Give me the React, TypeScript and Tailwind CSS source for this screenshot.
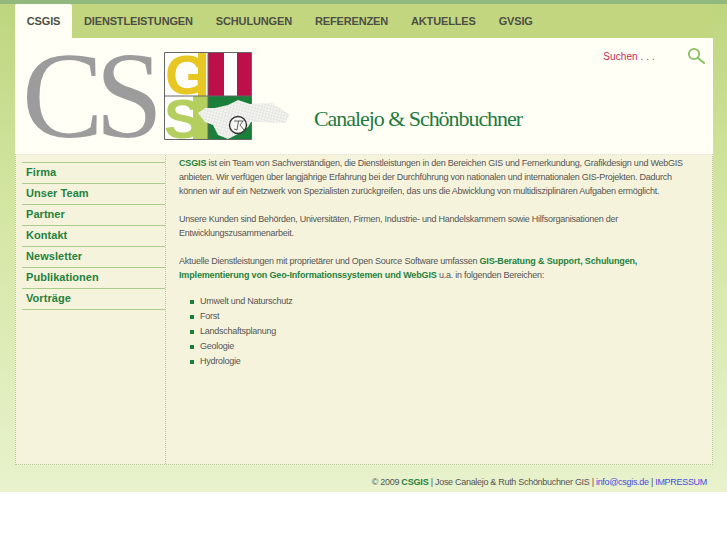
import * as React from 'react';

const NAV = ['CSGIS', 'DIENSTLEISTUNGEN', 'SCHULUNGEN', 'REFERENZEN', 'AKTUELLES', 'GVSIG'];
const SIDE = ['Firma', 'Unser Team', 'Partner', 'Kontakt', 'Newsletter', 'Publikationen', 'Vorträge'];
const AREAS = ['Umwelt und Naturschutz', 'Forst', 'Landschaftsplanung', 'Geologie', 'Hydrologie'];

const Logo = () => (
  <svg width="127" height="90" viewBox="0 0 127 90" className="shrink-0">
    <defs>
      <pattern id="mesh" width="3" height="3" patternUnits="userSpaceOnUse" patternTransform="rotate(15)">
        <rect width="3" height="3" fill="#f4f4f1" />
        <path d="M0 0H3M0 0V3" stroke="#c2c2bf" strokeWidth="0.5" />
      </pattern>
    </defs>
    <rect x="0.5" y="0.5" width="87" height="87" fill="#ffffff" />
    <rect x="44" y="1" width="43" height="43" fill="#bd0f4a" />
    <rect x="60" y="1" width="13" height="43" fill="#ffffff" />
    <rect x="34" y="1" width="8" height="43" fill="#e8c722" />
    <text x="1" y="42" fontFamily="'Liberation Sans', sans-serif" fontWeight="700" fontSize="56" fill="#e8c722">G</text>
    <rect x="29" y="44" width="15" height="43" fill="#b5cf5f" />
    <text x="0" y="86" fontFamily="'Liberation Sans', sans-serif" fontWeight="700" fontSize="56" fill="#b5cf5f">S</text>
    <rect x="44" y="44" width="43" height="43" fill="#1b7f3c" />
    <path d="M0.5 0.5H87.5V87.5H0.5ZM44 0.5V87.5M0.5 44H87.5" fill="none" stroke="#666" strokeWidth="1" />
    <path
      d="M34 61L41 56L51 56L64 53L74 48L86 52L108 51L119 58L126 63L121 71L87 70L84 75L76 81L64 87L54 83L49 73L41 70Z"
      fill="url(#mesh)"
    />
    <circle cx="74" cy="73" r="8.5" fill="#f6f6f2" stroke="#333" strokeWidth="1.4" />
    <path d="M70 69H79M74.5 69L73 78L70 77M76 73L80 78M76 73L79.5 68.5" fill="none" stroke="#444" strokeWidth="0.8" />
  </svg>
);

const SearchIcon = () => (
  <svg width="18" height="17" viewBox="0 0 18 17" className="shrink-0">
    <circle cx="7" cy="7" r="5.2" fill="none" stroke="#8cc063" strokeWidth="1.8" />
    <path d="M11 11L17 16" stroke="#8cc063" strokeWidth="2" strokeLinecap="round" />
  </svg>
);

export default function App() {
  return (
    <div className="h-[492px] bg-gradient-to-b from-[#bdd57e] via-[#d3e5a1] via-40% to-[#e8f2cd] font-['Liberation_Sans',Arial,sans-serif]">
      <div className="h-1 bg-[#92b97d]" />
      <div className="mx-[15px] w-[698px]">
        {/* Top nav */}
        <nav className="flex h-[34px] bg-[#c2d67f]">
          {NAV.map((item, i) => (
            <a
              key={item}
              className={`flex items-center justify-center text-[11px] font-bold tracking-[-0.15px] text-[#4d4f44] ${
                i === 0 ? 'w-[57px] rounded-t-[2px] bg-[#fffff5]' : 'mr-[-1px] px-3'
              }`}
            >
              {item}
            </a>
          ))}
        </nav>

        {/* Header */}
        <header className="flex h-[116px] bg-[#fffff5] pl-[7px]">
          <div className="w-[142px] shrink-0 font-['Liberation_Serif',serif] text-[122px] leading-[116px] tracking-[-8px] text-[#9c9c9c]">
            CS
          </div>
          <div className="pt-[14px]">
            <Logo />
          </div>
          <div className="self-end pb-[20px] pl-[23px] font-['Liberation_Serif',serif] text-[22px] leading-[30px] tracking-[-1.05px] whitespace-nowrap text-[#1f7a3e]">
            Canalejo &amp; Schönbuchner
          </div>
          <div className="ml-auto flex gap-[32px] pt-[9px] pr-[8px]">
            <span className="pt-[3px] text-[10px] leading-[14px] tracking-[0.1px] text-[#c72c5b]">Suchen . . .</span>
            <SearchIcon />
          </div>
        </header>

        {/* Main */}
        <main className="flex h-[311px] border border-t-[#e4e4d4] border-dotted border-[#b9c79a] bg-[#f6f3dc]">
          <aside className="w-[150px] shrink-0 border-r border-dotted border-[#b9c79a] pt-[7px] pl-[6px]">
            <ul className="border-t border-[#a8cc8c]">
              {SIDE.map((item) => (
                <li key={item} className="h-[21px] border-b border-[#a8cc8c] pl-1 text-[11px] leading-[19px] font-bold tracking-[0.05px] text-[#1f8240]">
                  {item}
                </li>
              ))}
            </ul>
          </aside>
          <div className="flex-1 pt-[1px] pl-[13px] text-[9px] leading-[14px] tracking-[-0.25px] text-[#555]">
            <p className="mb-[14px]">
              <b className="tracking-[-0.15px] text-[#1f8240]">CSGIS</b> ist ein Team von Sachverständigen, die Dienstleistungen in den Bereichen GIS und Fernerkundung, Grafikdesign und WebGIS
              <br />
              anbieten. Wir verfügen über langjährige Erfahrung bei der Durchführung von nationalen und internationalen GIS-Projekten. Dadurch
              <br />
              können wir auf ein Netzwerk von Spezialisten zurückgreifen, das uns die Abwicklung von multidisziplinären Aufgaben ermöglicht.
            </p>
            <p className="mb-[14px]">
              Unsere Kunden sind Behörden, Universitäten, Firmen, Industrie- und Handelskammern sowie Hilfsorganisationen der
              <br />
              Entwicklungszusammenarbeit.
            </p>
            <p>
              Aktuelle Dienstleistungen mit proprietärer und Open Source Software umfassen{' '}
              <b className="tracking-[-0.15px] text-[#1f8240]">GIS-Beratung &amp; Support, Schulungen,</b>
              <br />
              <b className="tracking-[-0.15px] text-[#1f8240]">Implementierung von Geo-Informationssystemen und WebGIS</b> u.a. in folgenden Bereichen:
            </p>
            <ul className="mt-[11px] pl-[11px]">
              {AREAS.map((item) => (
                <li key={item} className="flex h-[15px] items-center gap-[6px]">
                  <span className="mt-[2px] size-[4px] bg-[#1b7f3c]" />
                  {item}
                </li>
              ))}
            </ul>
          </div>
        </main>

        {/* Footer */}
        <footer className="pt-[10px] pr-[6px] text-right text-[9px] leading-[14px] tracking-[-0.3px] text-[#555]">
          © 2009 <b className="tracking-[-0.15px] text-[#1f8240]">CSGIS</b> | Jose Canalejo &amp; Ruth Schönbuchner GIS | <a className="text-[#4a4ae0]">info@csgis.de</a> | <a className="text-[#4a4ae0]">IMPRESSUM</a>
        </footer>
      </div>
    </div>
  );
}
